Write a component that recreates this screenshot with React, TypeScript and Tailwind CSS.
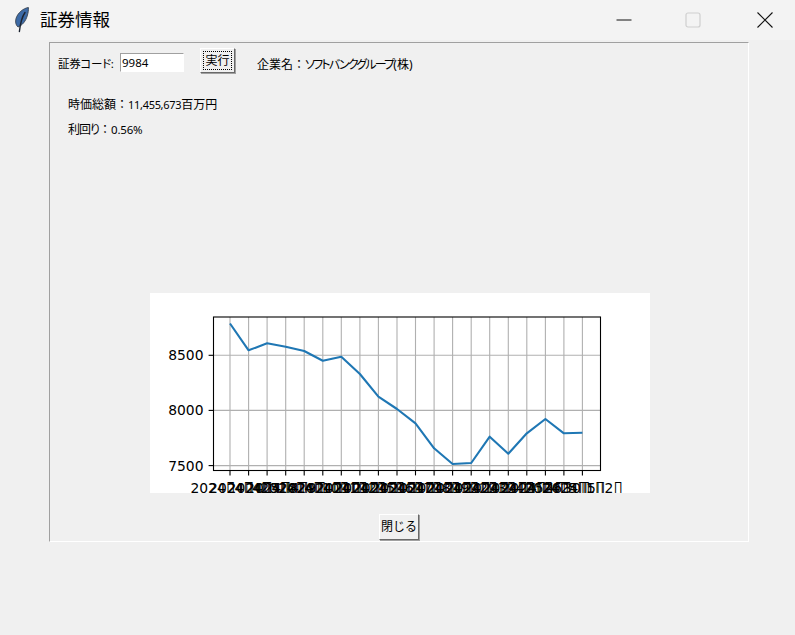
const points = [
  [230, 323.5], [248.6, 350.3], [267.1, 343.3], [285.7, 346.7], [304.2, 351],
  [322.8, 360.7], [341.3, 356.7], [359.9, 374], [378.4, 396.7], [397, 409],
  [415.5, 423.3], [434.1, 448.3], [452.6, 464], [471.2, 463], [489.7, 436.7],
  [508.3, 453.7], [526.8, 433.3], [545.4, 419], [563.9, 433.3], [582.4, 432.7],
];

const dates = [
  "4▯4", "4▯5", "4▯8", "4▯9", "4▯10", "4▯11", "4▯12", "4▯15", "4▯16", "4▯17",
  "4▯18", "4▯19", "4▯22", "4▯23", "4▯24", "4▯25", "4▯26", "4▯30", "5▯1", "5▯2",
];

const yTicks = [
  { label: "8500", y: 355.3 },
  { label: "8000", y: 410.4 },
  { label: "7500", y: 465.6 },
];

// each glyph gets its own x so the labels overlap the way the plot does
function TickLabel({ text, centerX }: { text: string; centerX: number }) {
  const adv = (c: string) => (c === "▯" ? 8.7 : 8.84);
  const chars = [...text];
  let x = centerX - chars.reduce((sum, c) => sum + adv(c), 0) / 2;
  return (
    <text y="492.6" fontSize="13.89" fontFamily="'DejaVu Sans', sans-serif" fill="#000">
      {chars.map((c, i) => {
        const pos = x;
        x += adv(c);
        return (
          <tspan key={i} x={pos.toFixed(1)} fontSize={c === "▯" ? 17 : undefined}>
            {c}
          </tspan>
        );
      })}
    </text>
  );
}

function Chart() {
  const ox = 150;
  const oy = 293;
  return (
    <svg width="500" height="200" viewBox={`${ox} ${oy} 500 200`} className="block bg-white">
      {points.map(([x]) => (
        <line key={x} x1={x} x2={x} y1={317} y2={470.5} stroke="#b0b0b0" strokeWidth="1.1" />
      ))}
      {yTicks.map((t) => (
        <line key={t.label} x1={213.5} x2={600.5} y1={t.y} y2={t.y} stroke="#b0b0b0" strokeWidth="1.1" />
      ))}
      <polyline
        points={points.map((p) => p.join(",")).join(" ")}
        fill="none"
        stroke="#1f77b4"
        strokeWidth="2.1"
        strokeLinejoin="round"
      />
      <rect x="213.5" y="317" width="387" height="153.5" fill="none" stroke="#000" strokeWidth="1.1" />
      {points.map(([x]) => (
        <line key={x} x1={x} x2={x} y1={470.5} y2={475.4} stroke="#000" strokeWidth="1.1" />
      ))}
      {yTicks.map((t) => (
        <g key={t.label}>
          <line x1={208.6} x2={213.5} y1={t.y} y2={t.y} stroke="#000" strokeWidth="1.1" />
          <text x="203.5" y={t.y + 5} textAnchor="end" fontSize="13.89" fontFamily="'DejaVu Sans', sans-serif" fill="#000">
            {t.label}
          </text>
        </g>
      ))}
      {points.map(([x], i) => (
        <TickLabel key={x} text={`2024▯${dates[i]}▯`} centerX={x} />
      ))}
    </svg>
  );
}

function Feather() {
  return (
    <svg width="14" height="26" viewBox="0 0 14 26" className="block">
      <path d="M13.4 0.5 C8.4 1.2 2.6 6 1 11.5 C0.2 14.8 0.6 18 3 20 C7.4 18.4 10.8 13.8 12.2 9 C13.2 5.8 13.6 3 13.4 0.5 Z" fill="#3c6aa6" stroke="#3a4450" strokeWidth="0.9" />
      <path d="M10 5.5 C7.6 9 5.6 14 4.4 24.5" fill="none" stroke="#1b2330" strokeWidth="1.4" strokeLinecap="round" />
    </svg>
  );
}

function WindowControls() {
  return (
    <div className="flex items-center">
      <svg width="16" height="16" viewBox="0 0 16 16" className="block mr-[53px]">
        <line x1="0.5" x2="15.5" y1="8" y2="8" stroke="#111" strokeWidth="1" />
      </svg>
      <svg width="16" height="16" viewBox="0 0 16 16" className="block mr-[56px]">
        <rect x="1" y="1" width="14" height="14" rx="2" fill="none" stroke="#cfcfcf" strokeWidth="1.2" />
      </svg>
      <svg width="16" height="16" viewBox="0 0 16 16" className="block">
        <path d="M0.5 0.5 L15.5 15.5 M15.5 0.5 L0.5 15.5" stroke="#111" strokeWidth="1.1" />
      </svg>
    </div>
  );
}

const raised =
  "border border-t-white border-l-white border-r-[#696969] border-b-[#696969] bg-[#f0f0f0] shadow-[1px_1px_0_#a0a0a0]";
const palt = "[font-feature-settings:'palt']";

export default function App() {
  return (
    <div className="h-[635px] w-[795px] overflow-hidden bg-[#f0f0f0] text-black font-['Noto_Sans','Noto_Sans_CJK_JP',sans-serif]">
      {/* Title bar */}
      <div className="flex h-10 items-center bg-[#f3f3f3] pl-[15px] pr-[22px]">
        <Feather />
        <span className="ml-[11px] text-[17.5px] leading-none">証券情報</span>
        <div className="ml-auto">
          <WindowControls />
        </div>
      </div>

      {/* Main frame */}
      <div className="ml-[49px] mt-[2px] h-[500px] w-[700px] border border-t-[#a0a0a0] border-l-[#a0a0a0] border-r-white border-b-white">
        <div className="flex items-start pl-[8px] pt-[5px]">
          <span className={`${palt} mt-[9px] w-[57px] shrink-0 whitespace-nowrap text-[11.5px] leading-[14px] tracking-[-0.3px]`}>証券コード:</span>
          <input
            readOnly
            value="9984"
            className="ml-[5px] mt-[5px] h-[19px] w-[64px] border border-t-[#a0a0a0] border-l-[#a0a0a0] border-r-white border-b-white bg-white pl-[1px] text-[11.5px] outline-none"
          />
          <button className={`${raised} ml-[16px] flex h-[25px] w-[35px] items-center justify-center p-[2px] text-[12px]`}>
            <span className="flex h-full w-full items-center justify-center border border-dotted border-black leading-none">実行</span>
          </button>
          <span className="ml-[22px] mt-[9px] text-[12px] leading-[16px]">
            企業名：<span className={`${palt} tracking-[-1.8px]`}>ソフトバンクグループ</span><span className={palt}>(株)</span>
          </span>
        </div>

        <div className="ml-[18px] mt-[24px] text-[12px] leading-[16px]">
          時価総額：<span className="text-[11px] tracking-[-0.3px]">11,455,673</span>百万円
        </div>
        <div className="ml-[18px] mt-[9px] text-[12px] leading-[16px]">
          <span className={`${palt} tracking-[-1px]`}>利回り</span>：<span className="text-[11.5px] tracking-[-0.2px]">0.56%</span>
        </div>

        <div className="ml-[100px] mt-[155px]">
          <Chart />
        </div>

        <div className="mt-[21px] flex justify-center">
          <button className={`${raised} flex h-[26px] w-[40px] items-center justify-center text-[12px] leading-none`}>閉じる</button>
        </div>
      </div>
    </div>
  );
}
